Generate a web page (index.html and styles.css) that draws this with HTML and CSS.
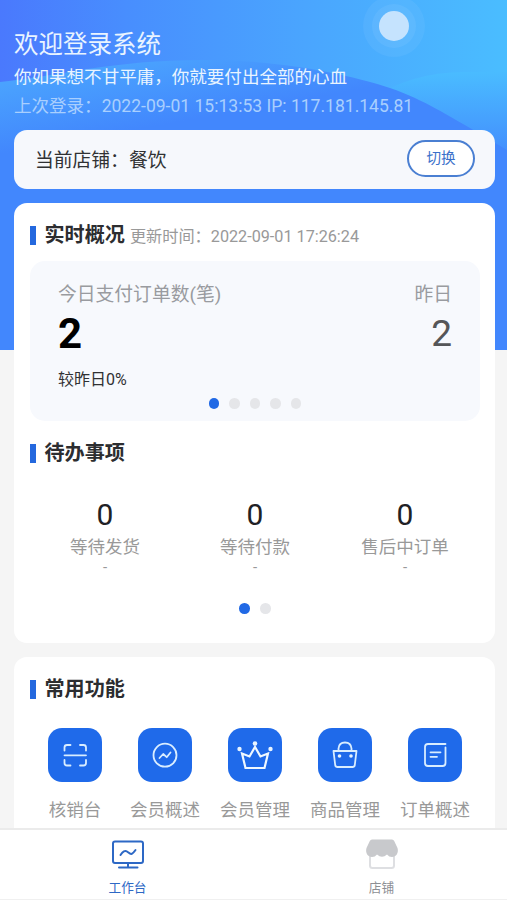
FILE: index.html
```html
<!DOCTYPE html>
<html lang="zh-CN">
<head>
<meta charset="utf-8">
<title>工作台</title>
<link rel="stylesheet" href="styles.css">
</head>
<body>
<svg class="hero-bg" viewBox="0 0 507 350" preserveAspectRatio="none" aria-hidden="true">
  <defs>
    <linearGradient id="sky" x1="0" y1="0" x2="1" y2="0">
      <stop offset="0" stop-color="#4a79fd"/><stop offset=".25" stop-color="#488efe"/><stop offset=".6" stop-color="#4aa5fe"/><stop offset="1" stop-color="#4abdff"/>
    </linearGradient>
    <linearGradient id="hillLeft" gradientUnits="userSpaceOnUse" x1="150" y1="58" x2="162" y2="125">
      <stop offset="0" stop-color="#4aa2fe"/><stop offset="1" stop-color="#4287fd"/>
    </linearGradient>
    <linearGradient id="hillRight" gradientUnits="userSpaceOnUse" x1="0" y1="72" x2="0" y2="165">
      <stop offset="0" stop-color="#4abcff"/><stop offset="1" stop-color="#4287fd"/>
    </linearGradient>
  </defs>
  <rect width="507" height="350" fill="url(#sky)"/>
  <circle cx="394" cy="26" r="31" fill="#fff" opacity=".05"/>
  <circle cx="394" cy="26" r="22" fill="#fff" opacity=".06"/>
  <circle cx="394" cy="26" r="15" fill="#c5e3fe"/>
  <path d="M370 100Q410 72 465 72H507V350H370z" fill="url(#hillRight)"/>
  <path d="M0 82C60 76 110 60 205 60C290 60 360 78 390 88C425 100 450 117 470 128L507 150V350H0z" fill="url(#hillLeft)"/>
</svg>

<main class="page">
  <header class="welcome">
    <h1>欢迎登录系统</h1>
    <p class="motto">你如果想不甘平庸，你就要付出全部的心血</p>
    <p class="last-login">上次登录：2022-09-01 15:13:53 IP: 117.181.145.81</p>
  </header>

  <section class="store">
    <span>当前店铺：餐饮</span>
    <button class="switch">切换</button>
  </section>

  <section class="card overview">
    <div class="heading"><h2>实时概况</h2><span class="updated">更新时间：2022-09-01 17:26:24</span></div>
    <div class="panel">
      <div class="panel-row labels"><span>今日支付订单数(笔)</span><span>昨日</span></div>
      <div class="panel-row values"><strong>2</strong><span>2</span></div>
      <p class="compare">较昨日0%</p>
      <div class="dots"><i class="on"></i><i></i><i></i><i></i><i></i></div>
    </div>
    <div class="heading todo-heading"><h2>待办事项</h2></div>
    <div class="todos">
      <div><b>0</b><span>等待发货</span><em>-</em></div>
      <div><b>0</b><span>等待付款</span><em>-</em></div>
      <div><b>0</b><span>售后中订单</span><em>-</em></div>
    </div>
    <div class="dots todo-dots"><i class="on"></i><i></i></div>
  </section>

  <section class="card functions">
    <div class="heading"><h2>常用功能</h2></div>
    <div class="grid">
      <div class="item">
        <svg class="icon" viewBox="0 0 54 54"><path d="M16.500 22.500V19.500Q16.500 17 19 17H22.500M32 17H35.500Q38 17 38 19.500V22.500M16.500 32V35Q16.500 37.500 19 37.500H22.500M32 37.500H35.500Q38 37.500 38 35V32M16.500 27.300H38"/></svg>
        <span>核销台</span>
      </div>
      <div class="item">
        <svg class="icon" viewBox="0 0 54 54"><circle cx="27" cy="27.200" r="11.500"/><path d="M21.500 30L25.200 26L28.700 29.200L32.500 24.500"/></svg>
        <span>会员概述</span>
      </div>
      <div class="item">
        <svg class="icon crown" viewBox="0 0 54 54"><path d="M14 25.500L17.500 40H36.500L40 25.500L32.500 28.500L27 19L21.500 28.500z"/><g class="solid"><circle cx="11.500" cy="21" r="2.200"/><circle cx="27" cy="15.500" r="2.300"/><circle cx="42.500" cy="21" r="2.200"/></g></svg>
        <span>会员管理</span>
      </div>
      <div class="item">
        <svg class="icon" viewBox="0 0 54 54"><path d="M15.500 23H38.500L36.800 37Q36.500 39 34.500 39H19.500Q17.500 39 17.200 37zM20.500 22.500V20.500Q21 14.500 27 14.500T33.500 20.500V22.500"/><g class="solid"><circle cx="21.500" cy="28" r="1.800"/><circle cx="33" cy="28" r="1.800"/></g></svg>
        <span>商品管理</span>
      </div>
      <div class="item">
        <svg class="icon" viewBox="0 0 54 54"><path d="M37.500 16H20Q17 16 17 19V35Q17 38 20 38H34.500Q37.500 38 37.500 35V19.500M22.500 24.300H32.500M22.500 28.800H29"/></svg>
        <span>订单概述</span>
      </div>
    </div>
  </section>
</main>

<nav class="tabs">
  <a class="tab active">
    <svg viewBox="0 0 36 32"><g fill="none" stroke="currentColor" stroke-width="2" stroke-linecap="round" stroke-linejoin="round"><rect x="3" y="3.500" width="30" height="21.500" rx="2"/><path d="M18 25V29.500M9 29.500H27.500M10.500 17Q14 11.500 17 13.500C20 15.500 21 18.500 25.500 12"/></g></svg>
    <span>工作台</span>
  </a>
  <a class="tab">
    <svg viewBox="0 0 36 32"><path d="M6 17V27.500Q6 30 8.500 30H27.500Q30 30 30 27.500V17" fill="none" stroke="#dedfe2" stroke-width="2"/><path d="M8 1.500H28Q29.500 1.500 30.200 3L33.500 10C35 15 32 19 28 19Q25 19 23 16.500Q18 21 13 16.500Q11 19 8 19C4 19 1 15 2.500 10L5.800 3Q6.500 1.500 8 1.500z" fill="#c8c9cc"/></svg>
    <span>店铺</span>
  </a>
</nav>
</body>
</html>
```
FILE: styles.css
```css
* { box-sizing: border-box; }
body {
  margin: 0;
  height: 900px;
  overflow: hidden;
  position: relative;
  display: flex;
  flex-direction: column;
  background: #f5f5f5;
  color: #303133;
  font-family: Roboto, "Noto Sans CJK SC", sans-serif;
}
h1, h2, p { margin: 0; }
.hero-bg { position: absolute; top: 0; left: 0; width: 507px; height: 350px; }
.page { position: relative; flex: 1; min-height: 0; overflow: hidden; padding: 0 12px 0 14px; }

.welcome { height: 130px; padding-top: 27px; color: #e9f4ff; white-space: nowrap; }
.welcome h1 { font-size: 24.5px; line-height: 36px; font-weight: 400; }
.motto { font-size: 17.55px; line-height: 28px; }
.last-login { font-size: 17.55px; line-height: 30px; color: #a9cffe; }

.store {
  height: 59px;
  padding: 0 20px 2px 21px;
  border-radius: 13px;
  background: #f6f8fc;
  display: flex;
  align-items: center;
  justify-content: space-between;
  font-size: 18.8px;
}
.switch {
  width: 68px;
  height: 37px;
  padding: 0 0 4px;
  border: 2px solid #4a7fd2;
  border-radius: 19px;
  background: #fff;
  color: #3a70ca;
  font: inherit;
  font-size: 14.6px;
}

.card { margin-top: 14px; padding: 0 15px 0 16px; border-radius: 13px; background: #fff; }
.overview { height: 440px; padding-top: 17px; }
.heading { display: flex; align-items: center; height: 30px; }
.heading::before { content: ""; width: 6px; height: 19px; margin: 0 8.5px 0 0; background: #2468de; }
.heading h2 { font-size: 20.1px; line-height: 30px; font-weight: 700; color: #2c2d30; }
.updated { margin: 3px 0 0 5px; font-size: 16.2px; line-height: 26px; color: #999; }

.panel {
  height: 160px;
  margin-top: 11px;
  padding: 20px 28px 0;
  border-radius: 15px;
  background: #f7f9fd;
}
.panel-row { display: flex; justify-content: space-between; }
.labels { font-size: 18.8px; line-height: 28px; color: #999ba0; }
.values { height: 51px; align-items: center; line-height: 49px; padding-bottom: 2px; font-size: 37px; color: #555658; }
.values strong { font-size: 42px; color: #000; }
.compare { font-size: 16px; line-height: 40px; color: #303133; }
.dots { display: flex; justify-content: center; gap: 10px; }
.panel .dots { margin-top: -2px; }
.dots i { width: 10.6px; height: 10.6px; border-radius: 50%; background: #e5e6e9; }
.dots .on { background: #2169e5; }
.todo-heading { margin-top: 17px; }
.todos { display: grid; grid-template-columns: repeat(3, 1fr); margin-top: 27px; height: 105px; }
.todos div { display: flex; flex-direction: column; align-items: center; }
.todos b { font-size: 30px; line-height: 39px; font-weight: 400; color: #202124; }
.todos span { margin-top: 1px; font-size: 17.5px; line-height: 24px; color: #999; }
.todos em { font-size: 15px; line-height: 16px; font-style: normal; color: #999; }
.todo-dots { margin-top: 3px; }

.functions { height: 240px; padding-top: 17px; }
.grid { display: grid; grid-template-columns: repeat(5, 1fr); margin-top: 24px; }
.item { display: flex; flex-direction: column; align-items: center; }
.item span { margin-top: 14px; font-size: 17.5px; line-height: 28px; color: #999; white-space: nowrap; }
.icon {
  width: 54px;
  height: 54px;
  border-radius: 14px;
  background: #1f6aea;
  fill: none;
  stroke: #d9edff;
  stroke-width: 1.8;
  stroke-linecap: round;
  stroke-linejoin: round;
}
.crown { stroke: #f0f8ff; stroke-width: 2.2; stroke-linejoin: miter; }
.solid { fill: #e8f4ff; stroke: none; }

.tabs {
  position: relative;
  height: 72px;
  display: grid;
  grid-template-columns: 255px 253px;
  background: #fff;
  border-top: 2px solid #ebebeb;
  border-bottom: 1px solid #f0f0f0;
}
.tab { display: flex; flex-direction: column; align-items: center; padding-top: 8px; font-size: 12.7px; color: #8d8f94; }
.tab svg { width: 36px; height: 32px; }
.tab span { margin-top: 8px; line-height: 20px; }
.tab.active { color: #2d68c5; }
```
